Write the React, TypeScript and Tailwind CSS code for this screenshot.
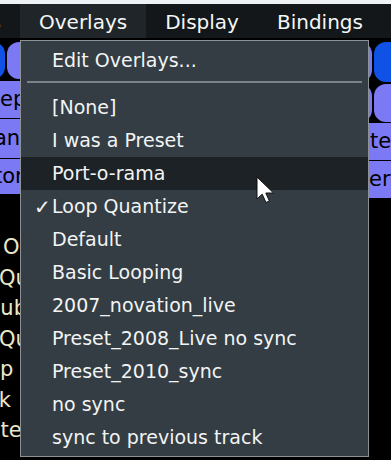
import React from "react";

const items = [
  "[None]",
  "I was a Preset",
  "Port-o-rama",
  "Loop Quantize",
  "Default",
  "Basic Looping",
  "2007_novation_live",
  "Preset_2008_Live no sync",
  "Preset_2010_sync",
  "no sync",
  "sync to previous track",
];

const hoverIndex = 2;
const checkedIndex = 3;

function Cursor() {
  return (
    <svg width="20" height="28" viewBox="0 0 20 28" className="absolute left-[256px] top-[176px]">
      <path
        d="M1 1 L1 23 L6.2 18.2 L10 26.5 L13.4 25 L9.8 17 L17.5 17 Z"
        fill="#ffffff"
        stroke="#111111"
        strokeWidth="1"
      />
    </svg>
  );
}

function OverlayMenu() {
  return (
    <div className="absolute left-[20px] top-[40px] w-[349px] border border-[#8c9295] bg-[#343d43] pt-[3px] pb-[2px] text-[19px] text-[#f2f4f5]">
      <div className="flex h-[33px] items-center pl-[31px]">Edit Overlays...</div>
      <div className="h-[14px] px-[6px] pt-[4px]">
        <div className="h-[2px] w-full bg-[#7c8386]" />
      </div>
      {items.map((label, i) => (
        <div
          key={label}
          className={`relative flex h-[33px] items-center pl-[31px] ${
            i === hoverIndex ? "bg-[#1c2225]" : ""
          }`}
        >
          {i === checkedIndex && (
            <span className="absolute left-[13px] text-[20px] leading-none font-bold">✓</span>
          )}
          {label}
        </div>
      ))}
    </div>
  );
}

function MenuBar() {
  return (
    <div className="flex h-[34px] items-stretch bg-[#131719] text-[20px] text-[#f4f6f7]">
      <div className="flex w-[20px] justify-end overflow-hidden whitespace-nowrap">
        <span className="flex items-center pt-[2px] pr-[19px]">Presets</span>
      </div>
      <div className="flex items-center bg-[#1f2528] px-[19px] pt-[2px]">Overlays</div>
      <div className="flex items-center px-[19px] pt-[2px]">Display</div>
      <div className="flex items-center px-[19px] pt-[2px]">Bindings</div>
    </div>
  );
}

function LeftPanel() {
  const lines = [
    { text: "Overdub", ml: "ml-[3px]" },
    { text: "Quantize", ml: "-ml-[1px]" },
    { text: "Subcycles", ml: "-ml-[13px]" },
    { text: "Quantize", ml: "-ml-[1px]" },
    { text: "Loop", ml: "-ml-[37px]" },
    { text: "Track", ml: "-ml-[44px]" },
    { text: "Mute", ml: "-ml-[31px]" },
  ];
  return (
    <div className="flex w-[120px] flex-col">
      <div className="flex h-[41px] gap-[2px] pt-[4px]">
        <div className="-ml-[25px] w-[30px] rounded-[12px] bg-[#1152e6]" />
        <div className="w-[44px] rounded-[12px] bg-[#7c79f5]" />
      </div>
      <div className="mt-[2px] flex flex-col gap-[1px] text-[21px] leading-none text-black">
        <div className="flex h-[37px] items-center whitespace-nowrap bg-[#7c79f5]">ep</div>
        <div className="flex h-[39px] items-center whitespace-nowrap bg-[#7c79f5]">
          <span className="-ml-[6px]">and</span>
        </div>
        <div className="flex h-[35px] items-center whitespace-nowrap bg-[#7c79f5]">
          <span className="-ml-[6px]">tor</span>
        </div>
      </div>
      <div className="mt-[38px] flex flex-col text-[21px] leading-[30.5px] text-[#ece7c9]">
        {lines.map((l) => (
          <span key={l.text + l.ml} className={`whitespace-nowrap ${l.ml}`}>
            {l.text}
          </span>
        ))}
      </div>
    </div>
  );
}

function RightPanel() {
  return (
    <div className="flex w-[60px] flex-col">
      <div className="flex h-[44px] gap-[2px] pt-[4px]">
        <div className="ml-[-3px] min-w-[44px] rounded-[12px] bg-[#7c79f5]" />
        <div className="min-w-[44px] rounded-[12px] bg-[#1152e6]" />
      </div>
      <div className="mt-[2px] flex h-[38px] gap-[2px]">
        <div className="ml-[-3px] min-w-[44px] rounded-[12px] bg-[#7c79f5]" />
        <div className="min-w-[44px] rounded-[12px] bg-[#7c79f5]" />
      </div>
      <div className="mt-[1px] flex flex-col gap-[1px] text-[21px] leading-none text-black">
        <div className="flex h-[37px] items-center whitespace-nowrap bg-[#7c79f5] pl-[39px]">te</div>
        <div className="flex h-[37px] items-center whitespace-nowrap bg-[#7c79f5] pl-[38px]">ere</div>
      </div>
    </div>
  );
}

export default function App() {
  return (
    <div className="relative h-[460px] w-[391px] overflow-hidden bg-black font-['DejaVu_Sans',sans-serif]">
      <div className="h-[4px] bg-[#eef2f5]" />
      <MenuBar />
      <div className="flex justify-between">
        <LeftPanel />
        <RightPanel />
      </div>
      <OverlayMenu />
      <Cursor />
    </div>
  );
}
